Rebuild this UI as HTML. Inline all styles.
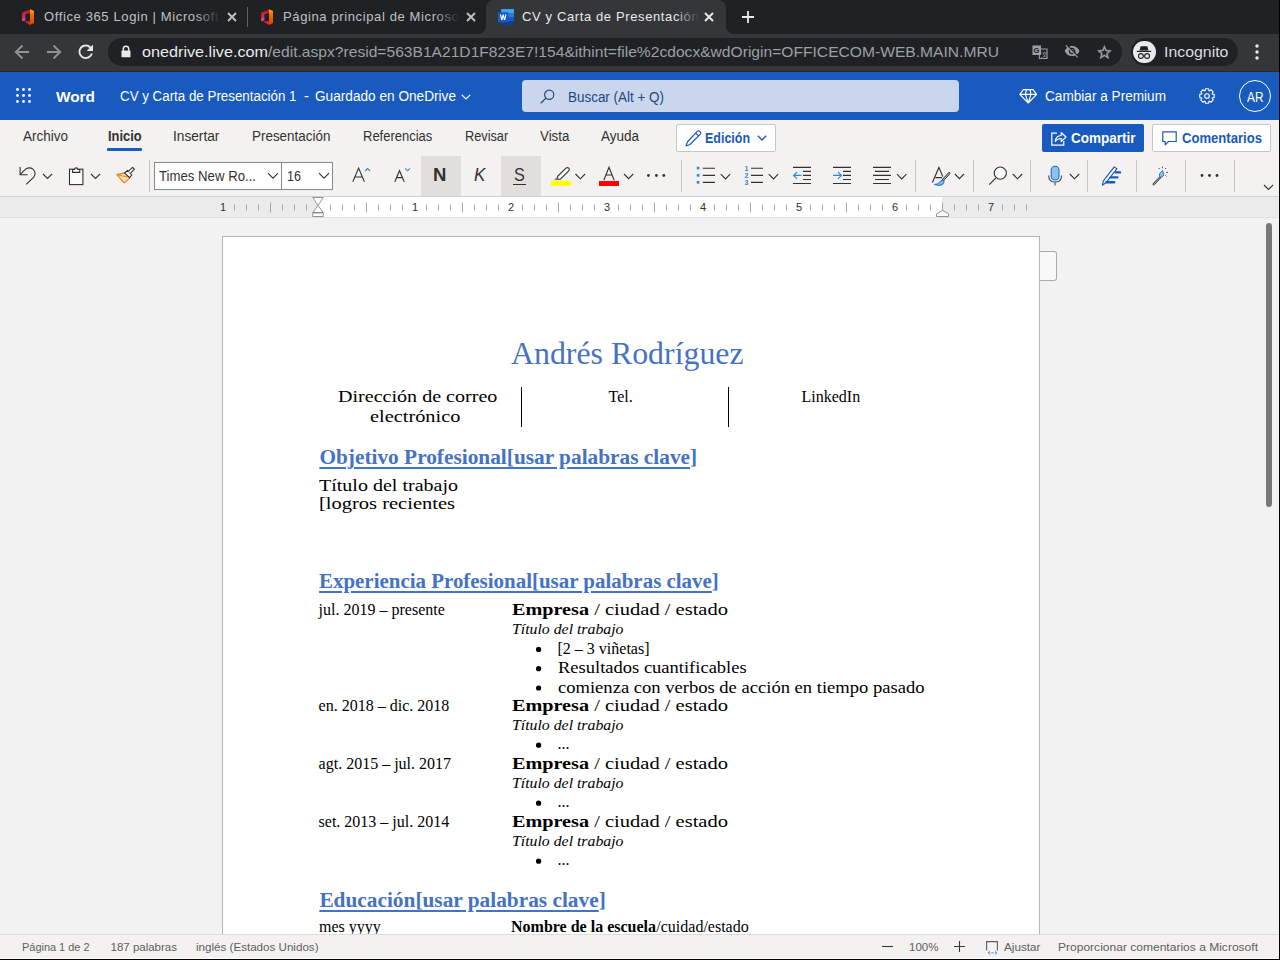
<!DOCTYPE html>
<html><head><meta charset="utf-8">
<style>
*{box-sizing:border-box;margin:0;padding:0}
html,body{width:1280px;height:960px;overflow:hidden;background:#f2f2f2;font-family:"Liberation Sans",sans-serif;position:relative}
.a{position:absolute}
.t{position:absolute;white-space:nowrap;line-height:1;transform-origin:0 0}
svg{position:absolute;overflow:visible}
</style></head><body>
<!-- ============ BROWSER TAB BAR ============ -->
<div class="a" style="left:0;top:0;width:1280px;height:34px;background:#202124"></div>
<div class="a" style="left:0;top:34px;width:1280px;height:38px;background:#35363a"></div>
<!-- active tab -->
<div class="a" style="left:486px;top:0;width:240px;height:34px;background:#35363a;border-radius:8px 8px 0 0"></div>
<div class="a" style="left:478px;top:26px;width:8px;height:8px;background:#35363a"></div>
<div class="a" style="left:470px;top:18px;width:16px;height:16px;background:#202124;border-radius:0 0 8px 0"></div>
<div class="a" style="left:726px;top:26px;width:8px;height:8px;background:#35363a"></div>
<div class="a" style="left:726px;top:18px;width:16px;height:16px;background:#202124;border-radius:0 0 0 8px"></div>
<!-- separator between tab1 and tab2 -->
<div class="a" style="left:247px;top:7px;width:1px;height:20px;background:#5f6368"></div>
<!-- office favicons -->
<svg style="left:22px;top:9px" width="12" height="16" viewBox="0 0 12 16">
 <defs><linearGradient id="og" x1="0" y1="0" x2="0" y2="1"><stop offset="0" stop-color="#ffb900"/><stop offset=".35" stop-color="#f06c00"/><stop offset="1" stop-color="#e13c00"/></linearGradient>
 <linearGradient id="rg" x1="0" y1="0" x2="0" y2="1"><stop offset="0" stop-color="#b01414"/><stop offset=".7" stop-color="#d8306a"/><stop offset="1" stop-color="#f060c0"/></linearGradient></defs>
 <path d="M0.2,3.6 L8,0.3 L8,4 L3.4,5.2 L3.4,11.2 L0.2,12.3Z" fill="url(#rg)"/>
 <path d="M2.2,12.2 L8,12.2 L8,16 Z" fill="#e8203a"/>
 <path d="M8,0.2 L12,2 L12,14 L8,16Z" fill="url(#og)"/>
</svg>
<svg style="left:261px;top:9px" width="12" height="16" viewBox="0 0 12 16">
 <path d="M0.2,3.6 L8,0.3 L8,4 L3.4,5.2 L3.4,11.2 L0.2,12.3Z" fill="url(#rg)"/>
 <path d="M2.2,12.2 L8,12.2 L8,16 Z" fill="#e8203a"/>
 <path d="M8,0.2 L12,2 L12,14 L8,16Z" fill="url(#og)"/>
</svg>
<!-- word favicon -->
<svg style="left:498px;top:9px" width="16" height="16" viewBox="0 0 16 16">
 <rect x="3.2" y="0" width="12.8" height="4" fill="#41a5ee"/>
 <rect x="3.2" y="4" width="12.8" height="4" fill="#2b7cd3"/>
 <rect x="3.2" y="8" width="12.8" height="4" fill="#185abd"/>
 <rect x="3.2" y="12" width="12.8" height="4" fill="#103f91"/>
 <rect x="0" y="3.2" width="10.4" height="10" rx="0.6" fill="#185abd"/>
 <path d="M1.9,5.6 L3.2,11 L4.5,11 L5.2,7.8 L5.9,11 L7.2,11 L8.5,5.6 L7.3,5.6 L6.6,9.1 L5.8,5.6 L4.6,5.6 L3.9,9.1 L3.1,5.6Z" fill="#fff"/>
</svg>
<!-- tab close x -->
<svg style="left:226px;top:11px;z-index:8" width="12" height="12" viewBox="0 0 12 12"><path d="M2,2 L10,10 M10,2 L2,10" stroke="#bdc1c6" stroke-width="1.9"/></svg>
<svg style="left:465px;top:11px;z-index:8" width="12" height="12" viewBox="0 0 12 12"><path d="M2,2 L10,10 M10,2 L2,10" stroke="#bdc1c6" stroke-width="1.9"/></svg>
<svg style="left:703px;top:11px;z-index:8" width="12" height="12" viewBox="0 0 12 12"><path d="M2,2 L10,10 M10,2 L2,10" stroke="#e8eaed" stroke-width="1.9"/></svg>
<!-- new tab + -->
<svg style="left:740px;top:9px" width="16" height="16" viewBox="0 0 16 16"><path d="M8,2 V14 M2,8 H14" stroke="#e8eaed" stroke-width="1.8"/></svg>

<!-- ============ TOOLBAR ============ -->
<svg style="left:14px;top:44px" width="16" height="16" viewBox="0 0 16 16"><path d="M15,8 H2.5 M8.5,1.5 L1.8,8 L8.5,14.5" stroke="#909296" stroke-width="1.9" fill="none"/></svg>
<svg style="left:46px;top:44px" width="16" height="16" viewBox="0 0 16 16"><path d="M1,8 H13.5 M7.5,1.5 L14.2,8 L7.5,14.5" stroke="#909296" stroke-width="1.9" fill="none"/></svg>
<svg style="left:75.3px;top:41.1px" width="21.6" height="21.6" viewBox="0 0 24 24"><path d="M17.65 6.35C16.2 4.9 14.21 4 12 4c-4.42 0-7.99 3.58-7.99 8s3.57 8 7.99 8c3.730 0 6.84-2.55 7.73-6h-2.08c-.82 2.33-3.04 4-5.650 4-3.31 0-6-2.69-6-6s2.69-6 6-6c1.66 0 3.14.69 4.22 1.78L13 11h7V4l-2.350 2.35z" fill="#e8eaed"/></svg>
<div class="a" style="left:108px;top:38px;width:1014px;height:28px;border-radius:14px;background:#202124"></div>
<!-- lock -->
<svg style="left:121px;top:45px" width="10" height="13" viewBox="0 0 10 13"><path d="M2.3,6 V4 A2.7,2.7 0 0 1 7.7,4 V6" stroke="#e8eaed" stroke-width="1.5" fill="none"/><rect x="0.5" y="5.6" width="9" height="6.6" rx="0.8" fill="#e8eaed"/></svg>
<!-- translate -->
<svg style="left:1032px;top:45px" width="16" height="14" viewBox="0 0 16 14">
 <rect x="0.5" y="0.5" width="8.5" height="9.5" fill="#9aa0a6"/>
 <path d="M7,4 H15 V13.5 H7.5Z" fill="none" stroke="#9aa0a6" stroke-width="1.1"/>
 <text x="1.6" y="8.2" font-size="7.5" font-family="Liberation Sans" font-weight="700" fill="#202124">G</text>
 <text x="9.2" y="11.8" font-size="7" font-family="Liberation Sans" fill="#9aa0a6">文</text>
</svg>
<!-- eye off -->
<svg style="left:1064px;top:43px" width="16.15" height="16.15" viewBox="0 0 24 24"><path fill="#9aa0a6" d="M12 7c2.76 0 5 2.24 5 5 0 .65-.13 1.26-.36 1.83l2.92 2.92c1.51-1.26 2.7-2.89 3.43-4.75-1.730-4.39-6-7.5-11-7.5-1.4 0-2.74.25-3.98.7l2.16 2.16C10.74 7.13 11.35 7 12 7zM2 4.27l2.28 2.28.46.46C3.08 8.3 1.78 10.02 1 12c1.73 4.39 6 7.5 11 7.5 1.55 0 3.03-.3 4.38-.84l.42.42L19.73 22 21 20.73 3.27 3 2 4.27zM7.53 9.8l1.55 1.55c-.05.21-.08.43-.08.65 0 1.66 1.34 3 3 3 .22 0 .44-.03.65-.08l1.55 1.55c-.67.33-1.41.53-2.2.53-2.76 0-5-2.24-5-5 0-.79.2-1.53.53-2.2zm4.31-.78l3.15 3.15.02-.16c0-1.66-1.34-3-3-3l-.17.01z"/></svg>
<!-- star -->
<svg style="left:1095.6px;top:43.6px" width="16.8" height="16.8" viewBox="0 0 24 24"><path fill="#9aa0a6" stroke="#9aa0a6" stroke-width="0.7" d="M22 9.24l-7.19-.62L12 2 9.19 8.63 2 9.24l5.46 4.73L5.82 21 12 17.27 18.18 21l-1.63-7.03L22 9.24zM12 15.4l-3.76 2.27 1-4.28-3.32-2.88 4.38-.38L12 6.1l1.71 4.04 4.38.38-3.32 2.88 1 4.28L12 15.4z"/></svg>
<!-- incognito pill -->
<div class="a" style="left:1131px;top:38px;width:107px;height:28px;border-radius:14px;background:#202124"></div>
<div class="a" style="left:1133px;top:40.5px;width:22.5px;height:22.5px;border-radius:50%;background:#e8eaed"></div>
<svg style="left:1133px;top:40.5px" width="22" height="22" viewBox="0 0 22 22">
 <path d="M7.6,5.2 H14.4 L15.4,9.6 H6.6Z" fill="#202124"/>
 <rect x="3.8" y="9.8" width="14.4" height="1.2" fill="#202124"/>
 <circle cx="7.9" cy="15" r="2.4" fill="none" stroke="#202124" stroke-width="1.1"/>
 <circle cx="14.1" cy="15" r="2.4" fill="none" stroke="#202124" stroke-width="1.1"/>
 <path d="M10.2,14.8 H11.8" stroke="#202124" stroke-width="1"/>
</svg>
<!-- menu dots -->
<svg style="left:1254px;top:43px" width="6" height="18" viewBox="0 0 6 18"><circle cx="3" cy="3" r="1.7" fill="#e8eaed"/><circle cx="3" cy="9" r="1.7" fill="#e8eaed"/><circle cx="3" cy="15" r="1.7" fill="#e8eaed"/></svg>

<!-- ============ WORD HEADER ============ -->
<div class="a" style="left:0;top:71px;width:1280px;height:1px;background:#2a2927"></div>
<div class="a" style="left:0;top:72px;width:1280px;height:48px;background:#185abd"></div>
<svg style="left:16px;top:88px" width="16" height="16" viewBox="0 0 16 16" fill="#fff">
 <circle cx="1.5" cy="1.5" r="1.4"/><circle cx="7.5" cy="1.5" r="1.4"/><circle cx="13.5" cy="1.5" r="1.4"/>
 <circle cx="1.5" cy="7.5" r="1.4"/><circle cx="7.5" cy="7.5" r="1.4"/><circle cx="13.5" cy="7.5" r="1.4"/>
 <circle cx="1.5" cy="13.5" r="1.4"/><circle cx="7.5" cy="13.5" r="1.4"/><circle cx="13.5" cy="13.5" r="1.4"/>
</svg>
<svg style="left:461px;top:94px" width="10" height="6" viewBox="0 0 10 6"><path d="M0.8,0.8 L5,5 L9.2,0.8" stroke="#fff" stroke-width="1.2" fill="none"/></svg>
<div class="a" style="left:522px;top:80px;width:437px;height:32px;border-radius:4px;background:#c9d6ec"></div>
<svg style="left:540px;top:89px" width="15" height="15" viewBox="0 0 15 15"><circle cx="9.2" cy="5.8" r="4.6" stroke="#25467e" stroke-width="1.2" fill="none"/><path d="M5.9,9.1 L0.8,14.2" stroke="#25467e" stroke-width="1.3"/></svg>
<!-- diamond -->
<svg style="left:1019px;top:87px" width="20" height="18" viewBox="1018 87 20 18"><path d="M1022.4,89.6 H1032 L1035.6,94.4 L1027.2,103 L1018.8,94.4Z M1018.8,94.4 H1035.6 M1025.4,89.6 L1024.4,94.4 L1027.2,103 L1030,94.4 L1029,89.6" stroke="#fff" stroke-width="1.15" fill="none" stroke-linejoin="round"/></svg>
<!-- gear -->
<svg style="left:1199px;top:88px" width="16" height="16" viewBox="0 0 16 16"><path d="M6.03,2.76 L6.39,0.78 L9.61,0.78 L9.97,2.76 L10.31,2.90 L11.96,1.75 L14.25,4.04 L13.10,5.69 L13.24,6.03 L15.22,6.39 L15.22,9.61 L13.24,9.97 L13.10,10.31 L14.25,11.96 L11.96,14.25 L10.31,13.10 L9.97,13.24 L9.61,15.22 L6.39,15.22 L6.03,13.24 L5.69,13.10 L4.04,14.25 L1.75,11.96 L2.90,10.31 L2.76,9.97 L0.78,9.61 L0.78,6.39 L2.76,6.03 L2.90,5.69 L1.75,4.04 L4.04,1.75 L5.69,2.90Z" stroke="#fff" stroke-width="1.1" fill="none" stroke-linejoin="round"/><circle cx="8" cy="8" r="2.3" stroke="#fff" stroke-width="1.1" fill="none"/></svg>
<div class="a" style="left:1239px;top:80px;width:32px;height:32px;border-radius:50%;border:1.2px solid #fff"></div>

<!-- ============ RIBBON ============ -->
<div class="a" style="left:0;top:120px;width:1280px;height:76px;background:#f3f2f1"></div>
<div class="a" style="left:107px;top:148px;width:35px;height:3px;background:#185abd;border-radius:1px"></div>
<!-- Edición button -->
<div class="a" style="left:676px;top:124px;width:100px;height:28px;background:#fff;border:1px solid #c8c6c4;border-radius:2px"></div>
<svg style="left:685px;top:130px" width="17" height="17" viewBox="0 0 17 17"><path d="M12.2,1.4 Q13.6,0.2 15,1.6 Q16.4,3 15.1,4.4 L5,14.5 L1,16 L2.4,12Z M10.6,3 L13.5,5.9" stroke="#185abd" stroke-width="1.2" fill="none" stroke-linejoin="round"/></svg>
<svg style="left:757px;top:135px" width="10" height="6" viewBox="0 0 10 6"><path d="M0.8,0.8 L5,5 L9.2,0.8" stroke="#185abd" stroke-width="1.3" fill="none"/></svg>
<!-- Compartir -->
<div class="a" style="left:1042px;top:124px;width:102px;height:28px;background:#185abd;border-radius:2px"></div>
<svg style="left:1051px;top:130px" width="16" height="16" viewBox="0 0 16 16"><path d="M6,3.2 H0.8 V15.2 H12.8 V11" stroke="#fff" stroke-width="1.2" fill="none"/><path d="M4.2,11.5 Q4.8,5.8 10.2,5.5 V2.5 L15,7 L10.2,11.5 V8.5 Q6,8.6 4.2,11.5Z" stroke="#fff" stroke-width="1.2" fill="none" stroke-linejoin="round"/></svg>
<!-- Comentarios -->
<div class="a" style="left:1152px;top:124px;width:119px;height:28px;background:#fff;border:1px solid #c8c6c4;border-radius:2px"></div>
<svg style="left:1162px;top:131px" width="15" height="15" viewBox="0 0 15 15"><path d="M0.8,0.8 H14.2 V10.5 H6.5 L3.2,13.8 V10.5 H0.8Z" stroke="#185abd" stroke-width="1.2" fill="none" stroke-linejoin="round"/></svg>

<!-- toolbar row -->
<svg style="left:14px;top:160px" width="130" height="32" viewBox="14 160 130 32">
 <path d="M20.1,167.1 V174.7 H27.7" stroke="#323130" stroke-width="1.1" fill="none"/>
 <path d="M20.6,174.2 L24.8,170 A5.6,5.6 0 0 1 33.8,177.2 L26.2,184.4" stroke="#323130" stroke-width="1.1" fill="none"/>
 <path d="M43,174 L47.5,178.5 L52,174" stroke="#323130" stroke-width="1.1" fill="none"/>
 <rect x="69.5" y="169.2" width="13.4" height="15.4" fill="#fafafa" stroke="#323130" stroke-width="1.1"/>
 <path d="M72.6,172.4 V169.5 H74.6 A1.6,1.6 0 0 1 77.8,169.5 H79.8 V172.4Z" fill="#fafafa" stroke="#323130" stroke-width="1.1"/>
 <path d="M91,174 L95.5,178.5 L100,174" stroke="#323130" stroke-width="1.1" fill="none"/>
 <path d="M116.8,174.6 L125.6,172.6 L129.8,177.8 L124.2,182.8Z" fill="#fbe0a8" stroke="#e8791c" stroke-width="1.1" stroke-linejoin="round"/>
 <path d="M118.4,175.2 L128.6,177" stroke="#e8791c" stroke-width="0.9"/>
 <path d="M124.6,173 L127.6,170.4 L131.8,175 L129.6,177.6Z" fill="#fff" stroke="#323130" stroke-width="1.1" stroke-linejoin="round"/>
 <path d="M128.4,171.4 L132.6,167.4 L134.4,169.2 L130.4,173.4" fill="#fff" stroke="#323130" stroke-width="1.1" stroke-linejoin="round"/>
</svg>
<div class="a" style="left:149px;top:160px;width:1px;height:32px;background:#c8c6c4"></div>
<!-- font box -->
<div class="a" style="left:154px;top:162px;width:179px;height:28px;background:#fff;border:1px solid #8a8886"></div>
<div class="a" style="left:281px;top:162px;width:1px;height:28px;background:#8a8886"></div>
<svg style="left:267px;top:172px" width="12" height="8" viewBox="0 0 12 8"><path d="M1,1.2 L6,6.2 L11,1.2" stroke="#323130" stroke-width="1.1" fill="none"/></svg>
<svg style="left:318px;top:172px" width="12" height="8" viewBox="0 0 12 8"><path d="M1,1.2 L6,6.2 L11,1.2" stroke="#323130" stroke-width="1.1" fill="none"/></svg>
<!-- A^ A˅ -->
<svg style="left:340px;top:160px" width="130" height="32" viewBox="340 160 130 32">
 <path d="M352.8,181.8 L358.6,168.1 L364.4,181.8 M354.9,177 H362.3" stroke="#323130" stroke-width="1.1" fill="none"/>
 <path d="M365.2,171 L367.6,168.6 L370,171" stroke="#2b88d8" stroke-width="1.1" fill="none"/>
 <path d="M394.8,181.8 L399.5,170.7 L404.2,181.8 M396.6,177.6 H402.4" stroke="#323130" stroke-width="1.1" fill="none"/>
 <path d="M405.2,168.4 L407.6,170.8 L410,168.4" stroke="#2b88d8" stroke-width="1.1" fill="none"/>
</svg>
<div class="a" style="left:421px;top:156px;width:40px;height:40px;background:#e1dfdd"></div>
<div class="a" style="left:501px;top:156px;width:40px;height:40px;background:#e1dfdd"></div>
<div class="t" style="left:433px;top:165.5px;font-size:18.5px;font-weight:700;color:#323130">N</div>
<div class="t" style="left:473.5px;top:166px;font-size:18px;font-style:italic;color:#323130;transform:scaleX(.95)">K</div>
<div class="t" style="left:514px;top:166px;font-size:18px;color:#323130;transform:scaleX(.9)">S</div>
<div class="a" style="left:513px;top:184px;width:13px;height:1.2px;background:#323130"></div>
<!-- highlighter / font color / dots -->
<svg style="left:540px;top:160px" width="140" height="32" viewBox="540 160 140 32">
 <path d="M557.5,176.5 L566,168.2 Q567.5,166.9 568.8,168.2 Q570,169.5 568.7,170.8 L560.4,179.2 L557.5,179.2Z" fill="#fff" stroke="#323130" stroke-width="1.1" stroke-linejoin="round"/>
 <path d="M557.5,177 L554,179.8 L558.5,179.8Z" fill="#605e5c"/>
 <rect x="551" y="180.8" width="20" height="5.1" fill="#ffff00"/>
 <path d="M575.5,174 L580.3,178.8 L585.1,174" stroke="#323130" stroke-width="1.1" fill="none"/>
 <path d="M603.8,180.2 L609,167.2 L614.2,180.2 M605.9,175 H612.1" stroke="#323130" stroke-width="1.1" fill="none"/>
 <rect x="599" y="181" width="20" height="5" fill="#ff0000"/>
 <path d="M624,174 L628.6,178.6 L633.2,174" stroke="#323130" stroke-width="1.1" fill="none"/>
 <circle cx="648.4" cy="175.5" r="1.4" fill="#323130"/><circle cx="656.4" cy="175.5" r="1.4" fill="#323130"/><circle cx="663.8" cy="175.5" r="1.4" fill="#323130"/>
</svg>
<!-- separators -->
<div class="a" style="left:681px;top:160px;width:1px;height:32px;background:#c8c6c4"></div>
<div class="a" style="left:915px;top:160px;width:1px;height:32px;background:#c8c6c4"></div>
<div class="a" style="left:973px;top:160px;width:1px;height:32px;background:#c8c6c4"></div>
<div class="a" style="left:1030px;top:160px;width:1px;height:32px;background:#c8c6c4"></div>
<div class="a" style="left:1087px;top:160px;width:1px;height:32px;background:#c8c6c4"></div>
<div class="a" style="left:1136px;top:160px;width:1px;height:32px;background:#c8c6c4"></div>
<div class="a" style="left:1185px;top:160px;width:1px;height:32px;background:#c8c6c4"></div>
<div class="a" style="left:1234px;top:160px;width:1px;height:32px;background:#c8c6c4"></div>
<!-- lists / indent / align -->
<svg style="left:690px;top:160px" width="230" height="32" viewBox="690 160 230 32">
 <g fill="#2b88d8"><rect x="696.8" y="166.8" width="2.6" height="2.6"/><rect x="696.8" y="174" width="2.6" height="2.6"/><rect x="696.8" y="181" width="2.6" height="2.6"/></g>
 <g stroke="#323130" stroke-width="1.15"><path d="M702.8,168.2 H715 M702.8,175.3 H715 M702.8,182.3 H715"/></g>
 <path d="M720.8,174.2 L725.5,178.9 L730.2,174.2" stroke="#323130" stroke-width="1.1" fill="none"/>
 <g font-family="Liberation Sans" font-size="7" font-weight="700" fill="#2b88d8"><text x="744.6" y="171.2">1</text><text x="744.4" y="178.2">2</text><text x="744.4" y="185.2">3</text></g>
 <g stroke="#323130" stroke-width="1.15"><path d="M751,168.2 H763 M751,175.3 H763 M751,182.3 H763"/></g>
 <path d="M768.8,174.2 L773.5,178.9 L778.2,174.2" stroke="#323130" stroke-width="1.1" fill="none"/>
 <g stroke="#323130" stroke-width="1.15"><path d="M793,167.4 H811 M803,171.4 H811 M803,175.4 H811 M803,179.5 H811 M793,183.5 H811"/></g>
 <path d="M801.5,175.4 H793.6 M797,172 L793.6,175.4 L797,178.8" stroke="#2b88d8" stroke-width="1.15" fill="none"/>
 <g stroke="#323130" stroke-width="1.15"><path d="M833,167.4 H851 M843,171.4 H851 M843,175.4 H851 M843,179.5 H851 M833,183.5 H851"/></g>
 <path d="M833,175.4 H841.4 M838,172 L841.4,175.4 L838,178.8" stroke="#2b88d8" stroke-width="1.15" fill="none"/>
 <g stroke="#323130" stroke-width="1.15"><path d="M873,167.4 H891 M875,171.4 H889 M873,175.4 H891 M875,179.5 H889 M873,183.5 H891"/></g>
 <path d="M897,174.2 L901.7,178.9 L906.4,174.2" stroke="#323130" stroke-width="1.1" fill="none"/>
</svg>
<!-- styles / find / dictate / editor / designer / more -->
<svg style="left:920px;top:160px" width="360" height="36" viewBox="920 160 360 36">
 <path d="M932.4,182.5 L938.9,167.4 L942.8,176.6 M935.5,177.6 H942.2" stroke="#323130" stroke-width="1.15" fill="none"/>
 <path d="M949.2,173.2 L943.2,179.8" stroke="#323130" stroke-width="2.4" stroke-linecap="round"/>
 <path d="M949.2,173.2 L943.2,179.8" stroke="#f3f2f1" stroke-width="0.8" stroke-linecap="round"/>
 <path d="M943.8,180.2 Q940.5,179.8 939.2,182.6 Q937.8,184.4 934.4,184.4 Q938.8,186.6 942.6,184.6 Q944.8,183 943.8,180.2Z" fill="#6fb3ec" stroke="#1470c5" stroke-width="0.9"/>
 <path d="M954.9,174 L959.4,178.6 L963.9,174" stroke="#323130" stroke-width="1.1" fill="none"/>
 <circle cx="1000.3" cy="173.1" r="6.1" fill="#fbfbfb" stroke="#323130" stroke-width="1.1"/>
 <path d="M995.7,178.2 L989.3,184.6" stroke="#323130" stroke-width="1.2"/>
 <path d="M1012.8,174 L1017.5,178.8 L1022.2,174" stroke="#323130" stroke-width="1.1" fill="none"/>
 <rect x="1051.2" y="166.2" width="7.8" height="13.8" rx="3.9" fill="#8cc3ef" stroke="#1470c5" stroke-width="1.1"/>
 <path d="M1048.6,175.4 Q1048.8,182 1055.1,182 Q1061.4,182 1061.6,175.4 M1055.1,182 V185.5" stroke="#505050" stroke-width="1.1" fill="none"/>
 <path d="M1069.8,174 L1074.5,178.8 L1079.2,174" stroke="#323130" stroke-width="1.1" fill="none"/>
 <path d="M1102.4,185.2 L1103.4,180.8 L1114.3,166.9 L1116.8,168.8 L1105.8,182.8Z" fill="#fff" stroke="#185abd" stroke-width="1.15" stroke-linejoin="round"/>
 <path d="M1115.8,172.4 H1120 M1110.6,177.4 H1117.3 M1106.4,182.2 H1114.2" stroke="#185abd" stroke-width="2.4" stroke-linecap="round"/>
 <path d="M1153.6,184.3 L1160.3,177.2" stroke="#323130" stroke-width="2.2" stroke-linecap="round"/>
 <path d="M1153.6,184.3 L1160.3,177.2" stroke="#f3f2f1" stroke-width="0.7" stroke-linecap="round"/>
 <path d="M1159.5,176.6 Q1158.8,173.6 1161.2,171.8 L1162.4,170.4 Q1164.6,173.8 1163.2,176 Q1161.6,178 1159.5,176.6Z" fill="#8cc3ef" stroke="#1470c5" stroke-width="0.9"/>
 <g stroke="#323130" stroke-width="0.9"><path d="M1162.4,166.6 V168.2 M1158.6,168 L1159.6,169 M1166.2,168 L1165.2,169 M1166.2,172.4 H1167.8 M1165.4,175.4 L1166.4,176.4"/></g>
 <circle cx="1202" cy="175.5" r="1.4" fill="#323130"/><circle cx="1209.5" cy="175.5" r="1.4" fill="#323130"/><circle cx="1217" cy="175.5" r="1.4" fill="#323130"/>
 <path d="M1264,185 L1268.5,189.5 L1273,185" stroke="#323130" stroke-width="1.1" fill="none"/>
</svg>

<!-- ============ RULER ============ -->
<div class="a" style="left:0;top:196px;width:1280px;height:1px;background:#d2d0ce"></div>
<div class="a" style="left:0;top:197px;width:1280px;height:20px;background:#ebebeb"></div>
<div class="a" style="left:318px;top:197px;width:624px;height:20px;background:#ffffff"></div>
<div class="a" style="left:0;top:217px;width:1280px;height:1px;background:#e1e1e1"></div>
<svg style="left:0;top:196px" width="1280" height="22" viewBox="0 196 1280 22" id="rulersvg">
<path d="M234.5,204.5 V210.5" stroke="#a8a8a8" stroke-width="1"/>
<path d="M246.5,204.5 V210.5" stroke="#a8a8a8" stroke-width="1"/>
<path d="M258.5,204.5 V210.5" stroke="#a8a8a8" stroke-width="1"/>
<path d="M270.5,202.5 V212.5" stroke="#a8a8a8" stroke-width="1"/>
<path d="M282.5,204.5 V210.5" stroke="#a8a8a8" stroke-width="1"/>
<path d="M294.5,204.5 V210.5" stroke="#a8a8a8" stroke-width="1"/>
<path d="M306.5,204.5 V210.5" stroke="#a8a8a8" stroke-width="1"/>
<path d="M330.5,204.5 V210.5" stroke="#a8a8a8" stroke-width="1"/>
<path d="M342.5,204.5 V210.5" stroke="#a8a8a8" stroke-width="1"/>
<path d="M354.5,204.5 V210.5" stroke="#a8a8a8" stroke-width="1"/>
<path d="M366.5,202.5 V212.5" stroke="#a8a8a8" stroke-width="1"/>
<path d="M378.5,204.5 V210.5" stroke="#a8a8a8" stroke-width="1"/>
<path d="M390.5,204.5 V210.5" stroke="#a8a8a8" stroke-width="1"/>
<path d="M402.5,204.5 V210.5" stroke="#a8a8a8" stroke-width="1"/>
<path d="M426.5,204.5 V210.5" stroke="#a8a8a8" stroke-width="1"/>
<path d="M438.5,204.5 V210.5" stroke="#a8a8a8" stroke-width="1"/>
<path d="M450.5,204.5 V210.5" stroke="#a8a8a8" stroke-width="1"/>
<path d="M462.5,202.5 V212.5" stroke="#a8a8a8" stroke-width="1"/>
<path d="M474.5,204.5 V210.5" stroke="#a8a8a8" stroke-width="1"/>
<path d="M486.5,204.5 V210.5" stroke="#a8a8a8" stroke-width="1"/>
<path d="M498.5,204.5 V210.5" stroke="#a8a8a8" stroke-width="1"/>
<path d="M522.5,204.5 V210.5" stroke="#a8a8a8" stroke-width="1"/>
<path d="M534.5,204.5 V210.5" stroke="#a8a8a8" stroke-width="1"/>
<path d="M546.5,204.5 V210.5" stroke="#a8a8a8" stroke-width="1"/>
<path d="M558.5,202.5 V212.5" stroke="#a8a8a8" stroke-width="1"/>
<path d="M570.5,204.5 V210.5" stroke="#a8a8a8" stroke-width="1"/>
<path d="M582.5,204.5 V210.5" stroke="#a8a8a8" stroke-width="1"/>
<path d="M594.5,204.5 V210.5" stroke="#a8a8a8" stroke-width="1"/>
<path d="M618.5,204.5 V210.5" stroke="#a8a8a8" stroke-width="1"/>
<path d="M630.5,204.5 V210.5" stroke="#a8a8a8" stroke-width="1"/>
<path d="M642.5,204.5 V210.5" stroke="#a8a8a8" stroke-width="1"/>
<path d="M654.5,202.5 V212.5" stroke="#a8a8a8" stroke-width="1"/>
<path d="M666.5,204.5 V210.5" stroke="#a8a8a8" stroke-width="1"/>
<path d="M678.5,204.5 V210.5" stroke="#a8a8a8" stroke-width="1"/>
<path d="M690.5,204.5 V210.5" stroke="#a8a8a8" stroke-width="1"/>
<path d="M714.5,204.5 V210.5" stroke="#a8a8a8" stroke-width="1"/>
<path d="M726.5,204.5 V210.5" stroke="#a8a8a8" stroke-width="1"/>
<path d="M738.5,204.5 V210.5" stroke="#a8a8a8" stroke-width="1"/>
<path d="M750.5,202.5 V212.5" stroke="#a8a8a8" stroke-width="1"/>
<path d="M762.5,204.5 V210.5" stroke="#a8a8a8" stroke-width="1"/>
<path d="M774.5,204.5 V210.5" stroke="#a8a8a8" stroke-width="1"/>
<path d="M786.5,204.5 V210.5" stroke="#a8a8a8" stroke-width="1"/>
<path d="M810.5,204.5 V210.5" stroke="#a8a8a8" stroke-width="1"/>
<path d="M822.5,204.5 V210.5" stroke="#a8a8a8" stroke-width="1"/>
<path d="M834.5,204.5 V210.5" stroke="#a8a8a8" stroke-width="1"/>
<path d="M846.5,202.5 V212.5" stroke="#a8a8a8" stroke-width="1"/>
<path d="M858.5,204.5 V210.5" stroke="#a8a8a8" stroke-width="1"/>
<path d="M870.5,204.5 V210.5" stroke="#a8a8a8" stroke-width="1"/>
<path d="M882.5,204.5 V210.5" stroke="#a8a8a8" stroke-width="1"/>
<path d="M906.5,204.5 V210.5" stroke="#a8a8a8" stroke-width="1"/>
<path d="M918.5,204.5 V210.5" stroke="#a8a8a8" stroke-width="1"/>
<path d="M930.5,204.5 V210.5" stroke="#a8a8a8" stroke-width="1"/>
<path d="M942.5,202.5 V212.5" stroke="#a8a8a8" stroke-width="1"/>
<path d="M954.5,204.5 V210.5" stroke="#a8a8a8" stroke-width="1"/>
<path d="M966.5,204.5 V210.5" stroke="#a8a8a8" stroke-width="1"/>
<path d="M978.5,204.5 V210.5" stroke="#a8a8a8" stroke-width="1"/>
<path d="M1002.5,204.5 V210.5" stroke="#a8a8a8" stroke-width="1"/>
<path d="M1014.5,204.5 V210.5" stroke="#a8a8a8" stroke-width="1"/>
<path d="M1026.5,204.5 V210.5" stroke="#a8a8a8" stroke-width="1"/>
 <path d="M312.8,197.5 H323.2 L318,205.5Z M318,205.5 L312.8,212.5 H323.2Z" fill="#fff" stroke="#8a8886" stroke-width="0.9"/>
 <rect x="312.8" y="213" width="10.4" height="3.5" fill="#fff" stroke="#8a8886" stroke-width="0.9"/>
 <path d="M936.5,216.5 V213.8 L942.5,210.5 L948.5,213.8 V216.5Z" fill="#fff" stroke="#8a8886" stroke-width="0.9"/>
</svg>

<!-- ============ CANVAS / PAGE ============ -->
<div class="a" style="left:1039px;top:251px;width:18px;height:30px;background:#f8f8f8;border:1px solid #aaa;border-left:none;border-radius:0 3px 3px 0"></div>
<div class="a" style="left:222px;top:236px;width:818px;height:710px;background:#fff;border:1px solid #b5b5b5;border-bottom:none"></div>
<div class="a" style="left:521px;top:387px;width:1.2px;height:40px;background:#000"></div>
<div class="a" style="left:728px;top:387px;width:1.2px;height:40px;background:#000"></div>
<svg style="left:530px;top:640px" width="20" height="240" viewBox="530 640 20 240" fill="#000">
 <circle cx="538.6" cy="649.4" r="2.6"/><circle cx="538.6" cy="668.7" r="2.6"/><circle cx="538.6" cy="688" r="2.6"/>
 <circle cx="538.6" cy="745.2" r="2.6"/><circle cx="538.6" cy="803.2" r="2.6"/><circle cx="538.6" cy="861.2" r="2.6"/>
</svg>
<!-- scrollbar -->
<div class="a" style="left:1266px;top:223px;width:6px;height:284px;border-radius:3px;background:#787878"></div>

<div class="t" style="left:44.00px;top:10.00px;font-family:'Liberation Sans';font-size:13px;color:#bdc1c6;letter-spacing:0.62px;">Office 365 Login | Microsoft</div>
<div class="t" style="left:283.00px;top:10.00px;font-family:'Liberation Sans';font-size:13px;color:#bdc1c6;letter-spacing:0.62px;">Página principal de Microsoft</div>
<div class="t" style="left:522.00px;top:10.00px;font-family:'Liberation Sans';font-size:13px;color:#e8eaed;letter-spacing:0.62px;">CV y Carta de Presentación 1</div>
<div class="t" style="left:142.00px;top:45.00px;font-family:'Liberation Sans';font-size:14.5px;color:#e8eaed;transform:scaleX(1.1167);">onedrive.live.com</div>
<div class="t" style="left:268.00px;top:45.00px;font-family:'Liberation Sans';font-size:14.5px;color:#9aa0a6;transform:scaleX(1.0766);">/edit.aspx?resid=563B1A21D1F823E7!154&amp;ithint=file%2cdocx&amp;wdOrigin=OFFICECOM-WEB.MAIN.MRU</div>
<div class="t" style="left:1163.60px;top:45.00px;font-family:'Liberation Sans';font-size:14.5px;color:#dadce0;transform:scaleX(1.0941);">Incognito</div>
<div class="t" style="left:56.00px;top:89.00px;font-family:'Liberation Sans';font-size:15.5px;color:#ffffff;font-weight:700;transform:scaleX(0.9917);">Word</div>
<div class="t" style="left:119.50px;top:89.00px;font-family:'Liberation Sans';font-size:14px;color:#ffffff;transform:scaleX(0.9529);">CV y Carta de Presentación 1</div>
<div class="t" style="left:303.50px;top:89.00px;font-family:'Liberation Sans';font-size:14px;color:#ffffff;transform:scaleX(1.0702);">-</div>
<div class="t" style="left:315.00px;top:89.00px;font-family:'Liberation Sans';font-size:14px;color:#ffffff;transform:scaleX(0.9740);">Guardado en OneDrive</div>
<div class="t" style="left:567.80px;top:89.60px;font-family:'Liberation Sans';font-size:14px;color:#234784;transform:scaleX(0.9603);">Buscar (Alt + Q)</div>
<div class="t" style="left:1045.00px;top:89.00px;font-family:'Liberation Sans';font-size:14px;color:#ffffff;transform:scaleX(0.9720);">Cambiar a Premium</div>
<div class="t" style="left:1247.00px;top:89.80px;font-family:'Liberation Sans';font-size:14px;color:#ffffff;transform:scaleX(0.8482);">AR</div>
<div class="t" style="left:22.60px;top:129.20px;font-family:'Liberation Sans';font-size:14px;color:#323130;transform:scaleX(0.9660);">Archivo</div>
<div class="t" style="left:173.00px;top:129.20px;font-family:'Liberation Sans';font-size:14px;color:#323130;transform:scaleX(0.9775);">Insertar</div>
<div class="t" style="left:252.30px;top:129.20px;font-family:'Liberation Sans';font-size:14px;color:#323130;transform:scaleX(0.9594);">Presentación</div>
<div class="t" style="left:363.40px;top:129.20px;font-family:'Liberation Sans';font-size:14px;color:#323130;transform:scaleX(0.9277);">Referencias</div>
<div class="t" style="left:465.00px;top:129.20px;font-family:'Liberation Sans';font-size:14px;color:#323130;transform:scaleX(0.9101);">Revisar</div>
<div class="t" style="left:539.80px;top:129.20px;font-family:'Liberation Sans';font-size:14px;color:#323130;transform:scaleX(0.9522);">Vista</div>
<div class="t" style="left:601.20px;top:129.20px;font-family:'Liberation Sans';font-size:14px;color:#323130;transform:scaleX(0.9657);">Ayuda</div>
<div class="t" style="left:107.60px;top:129.20px;font-family:'Liberation Sans';font-size:14px;color:#323130;font-weight:700;transform:scaleX(0.9217);">Inicio</div>
<div class="t" style="left:705.00px;top:131.00px;font-family:'Liberation Sans';font-size:14px;color:#185abd;font-weight:700;transform:scaleX(0.8900);">Edición</div>
<div class="t" style="left:1071.00px;top:131.00px;font-family:'Liberation Sans';font-size:14px;color:#ffffff;font-weight:700;transform:scaleX(0.9640);">Compartir</div>
<div class="t" style="left:1182.00px;top:131.00px;font-family:'Liberation Sans';font-size:14px;color:#185abd;font-weight:700;transform:scaleX(0.9348);">Comentarios</div>
<div class="t" style="left:159.00px;top:169.00px;font-family:'Liberation Sans';font-size:14px;color:#323130;transform:scaleX(0.9422);">Times New Ro...</div>
<div class="t" style="left:287.00px;top:169.00px;font-family:'Liberation Sans';font-size:14px;color:#323130;transform:scaleX(0.8987);">16</div>
<div class="t" style="left:220.00px;top:201.80px;font-family:'Liberation Sans';font-size:11px;color:#323130;">1</div>
<div class="t" style="left:412.00px;top:201.80px;font-family:'Liberation Sans';font-size:11px;color:#323130;">1</div>
<div class="t" style="left:508.00px;top:201.80px;font-family:'Liberation Sans';font-size:11px;color:#323130;">2</div>
<div class="t" style="left:604.00px;top:201.80px;font-family:'Liberation Sans';font-size:11px;color:#323130;">3</div>
<div class="t" style="left:700.00px;top:201.80px;font-family:'Liberation Sans';font-size:11px;color:#323130;">4</div>
<div class="t" style="left:796.00px;top:201.80px;font-family:'Liberation Sans';font-size:11px;color:#323130;">5</div>
<div class="t" style="left:892.00px;top:201.80px;font-family:'Liberation Sans';font-size:11px;color:#323130;">6</div>
<div class="t" style="left:988.00px;top:201.80px;font-family:'Liberation Sans';font-size:11px;color:#323130;">7</div>
<div class="t" style="left:511.20px;top:336.50px;font-family:'Liberation Serif';font-size:32px;color:#4472c4;transform:scaleX(0.9952);">Andrés Rodríguez</div>
<div class="t" style="left:337.90px;top:388.70px;font-family:'Liberation Serif';font-size:16.5px;color:#000;transform:scaleX(1.2166);">Dirección de correo</div>
<div class="t" style="left:369.80px;top:408.60px;font-family:'Liberation Serif';font-size:16.5px;color:#000;transform:scaleX(1.2333);">electrónico</div>
<div class="t" style="left:608.60px;top:388.80px;font-family:'Liberation Serif';font-size:16px;color:#000;">Tel.</div>
<div class="t" style="left:801.50px;top:388.80px;font-family:'Liberation Serif';font-size:16px;color:#000;">LinkedIn</div>
<div class="t" style="left:319.40px;top:477.80px;font-family:'Liberation Serif';font-size:16.5px;color:#000;transform:scaleX(1.2133);">Título del trabajo</div>
<div class="t" style="left:319.40px;top:495.75px;font-family:'Liberation Serif';font-size:16.5px;color:#000;transform:scaleX(1.2420);">[logros recientes</div>
<div class="t" style="left:318.60px;top:601.90px;font-family:'Liberation Serif';font-size:16px;color:#000;">jul. 2019 – presente</div>
<div class="t" style="left:511.80px;top:601.90px;font-family:'Liberation Serif';font-size:16.5px;color:#000;font-weight:700;transform:scaleX(1.2231);">Empresa</div>
<div class="t" style="left:588.80px;top:601.90px;font-family:'Liberation Serif';font-size:16.5px;color:#000;transform:scaleX(1.2432);"> / ciudad / estado</div>
<div class="t" style="left:511.80px;top:621.60px;font-family:'Liberation Serif';font-size:14.2px;color:#000;font-style:italic;transform:scaleX(1.1138);">Título del trabajo</div>
<div class="t" style="left:318.60px;top:698.10px;font-family:'Liberation Serif';font-size:16px;color:#000;">en. 2018 – dic. 2018</div>
<div class="t" style="left:511.80px;top:698.10px;font-family:'Liberation Serif';font-size:16.5px;color:#000;font-weight:700;transform:scaleX(1.2231);">Empresa</div>
<div class="t" style="left:588.80px;top:698.10px;font-family:'Liberation Serif';font-size:16.5px;color:#000;transform:scaleX(1.2432);"> / ciudad / estado</div>
<div class="t" style="left:511.80px;top:717.80px;font-family:'Liberation Serif';font-size:14.2px;color:#000;font-style:italic;transform:scaleX(1.1138);">Título del trabajo</div>
<div class="t" style="left:318.60px;top:756.10px;font-family:'Liberation Serif';font-size:16px;color:#000;">agt. 2015 – jul. 2017</div>
<div class="t" style="left:511.80px;top:756.10px;font-family:'Liberation Serif';font-size:16.5px;color:#000;font-weight:700;transform:scaleX(1.2231);">Empresa</div>
<div class="t" style="left:588.80px;top:756.10px;font-family:'Liberation Serif';font-size:16.5px;color:#000;transform:scaleX(1.2432);"> / ciudad / estado</div>
<div class="t" style="left:511.80px;top:775.80px;font-family:'Liberation Serif';font-size:14.2px;color:#000;font-style:italic;transform:scaleX(1.1138);">Título del trabajo</div>
<div class="t" style="left:318.60px;top:814.10px;font-family:'Liberation Serif';font-size:16px;color:#000;">set. 2013 – jul. 2014</div>
<div class="t" style="left:511.80px;top:814.10px;font-family:'Liberation Serif';font-size:16.5px;color:#000;font-weight:700;transform:scaleX(1.2231);">Empresa</div>
<div class="t" style="left:588.80px;top:814.10px;font-family:'Liberation Serif';font-size:16.5px;color:#000;transform:scaleX(1.2432);"> / ciudad / estado</div>
<div class="t" style="left:511.80px;top:833.80px;font-family:'Liberation Serif';font-size:14.2px;color:#000;font-style:italic;transform:scaleX(1.1138);">Título del trabajo</div>
<div class="t" style="left:557.50px;top:640.90px;font-family:'Liberation Serif';font-size:16px;color:#000;">[2 – 3 viñetas]</div>
<div class="t" style="left:557.50px;top:660.20px;font-family:'Liberation Serif';font-size:16.5px;color:#000;transform:scaleX(1.1221);">Resultados cuantificables</div>
<div class="t" style="left:557.50px;top:679.50px;font-family:'Liberation Serif';font-size:16.5px;color:#000;transform:scaleX(1.1251);">comienza con verbos de acción en tiempo pasado</div>
<div class="t" style="left:557.50px;top:736.10px;font-family:'Liberation Serif';font-size:16px;color:#000;">...</div>
<div class="t" style="left:557.50px;top:794.10px;font-family:'Liberation Serif';font-size:16px;color:#000;">...</div>
<div class="t" style="left:557.50px;top:852.10px;font-family:'Liberation Serif';font-size:16px;color:#000;">...</div>
<div class="t" style="left:319.00px;top:919.00px;font-family:'Liberation Serif';font-size:16px;color:#000;">mes yyyy</div>
<div class="t" style="left:511.00px;top:919.00px;font-family:'Liberation Serif';font-size:16px;color:#000;font-weight:700;">Nombre de la escuela</div>
<div class="t" style="left:656.30px;top:919.00px;font-family:'Liberation Serif';font-size:16px;color:#000;">/cuidad/estado</div>
<div class="t" style="left:21.50px;top:942.00px;font-family:'Liberation Sans';font-size:11.5px;color:#605e5c;transform:scaleX(0.9509);z-index:6;">Página 1 de 2</div>
<div class="t" style="left:110.50px;top:942.00px;font-family:'Liberation Sans';font-size:11.5px;color:#605e5c;z-index:6;">187 palabras</div>
<div class="t" style="left:195.50px;top:942.00px;font-family:'Liberation Sans';font-size:11.5px;color:#605e5c;transform:scaleX(1.0086);z-index:6;">inglés (Estados Unidos)</div>
<div class="t" style="left:909.00px;top:942.00px;font-family:'Liberation Sans';font-size:11.5px;color:#605e5c;z-index:6;">100%</div>
<div class="t" style="left:1003.50px;top:942.00px;font-family:'Liberation Sans';font-size:11.5px;color:#605e5c;transform:scaleX(1.0196);z-index:6;">Ajustar</div>
<div class="t" style="left:1058.00px;top:942.00px;font-family:'Liberation Sans';font-size:11.5px;color:#605e5c;transform:scaleX(1.0465);z-index:6;">Proporcionar comentarios a Microsoft</div>
<div class="t" style="left:319.40px;top:447.00px;font-family:'Liberation Serif';font-size:21.33px;color:#4472c4;font-weight:700;"><span style="text-decoration:underline;text-decoration-thickness:2px;text-underline-offset:3px">Objetivo Profesional[usar palabras clave</span>]</div>
<div class="t" style="left:319.40px;top:571.00px;font-family:'Liberation Serif';font-size:21.33px;color:#4472c4;font-weight:700;transform:scaleX(0.9814);"><span style="text-decoration:underline;text-decoration-thickness:2px;text-underline-offset:3px">Experiencia Profesional[usar palabras clave</span>]</div>
<div class="t" style="left:319.40px;top:889.80px;font-family:'Liberation Serif';font-size:21.33px;color:#4472c4;font-weight:700;"><span style="text-decoration:underline;text-decoration-thickness:2px;text-underline-offset:3px">Educación[usar palabras clave</span>]</div>

<!-- ============ STATUS BAR ============ -->
<div class="a" style="left:0;top:934px;width:1280px;height:26px;background:#f3f2f1;border-top:1px solid #dcdcdc;z-index:5"></div>
<svg style="left:880px;top:938px;z-index:6" width="130" height="18" viewBox="880 938 130 18">
 <path d="M882,946.5 H893" stroke="#3b3a39" stroke-width="1.1"/>
 <path d="M954,946.5 H965 M959.5,941 V952" stroke="#3b3a39" stroke-width="1.1"/>
 <path d="M986.6,950.5 V941.6 H997.4 V950.5" stroke="#605e5c" stroke-width="1.1" fill="none"/>
 <path d="M988,952.8 H997 M989.8,951 L988,952.8 L989.8,954.6 M995.2,951 L997,952.8 L995.2,954.6" stroke="#2b88d8" stroke-width="0.9" fill="none" stroke-dasharray="2.2 1.2"/>
</svg>
<div class="a" style="left:0;top:958px;width:1280px;height:1px;background:#ffffff;z-index:7"></div>
<div class="a" style="left:0;top:959px;width:1280px;height:1px;background:#000;z-index:7"></div>
<div class="a" style="left:1279px;top:0;width:1px;height:960px;background:#000;z-index:7"></div>
<!-- tab title fades -->
<div class="a" style="left:196px;top:4px;width:24px;height:26px;background:linear-gradient(90deg,rgba(32,33,36,0),#202124);z-index:6"></div>
<div class="a" style="left:435px;top:4px;width:24px;height:26px;background:linear-gradient(90deg,rgba(32,33,36,0),#202124);z-index:6"></div>
<div class="a" style="left:220px;top:4px;width:24px;height:26px;background:#202124;z-index:6"></div>
<div class="a" style="left:459px;top:4px;width:24px;height:26px;background:#202124;z-index:6"></div>
<div class="a" style="left:675px;top:4px;width:24px;height:26px;background:linear-gradient(90deg,rgba(53,54,58,0),#35363a);z-index:6"></div>
<div class="a" style="left:699px;top:4px;width:26px;height:26px;background:#35363a;z-index:6"></div>
</body></html>
